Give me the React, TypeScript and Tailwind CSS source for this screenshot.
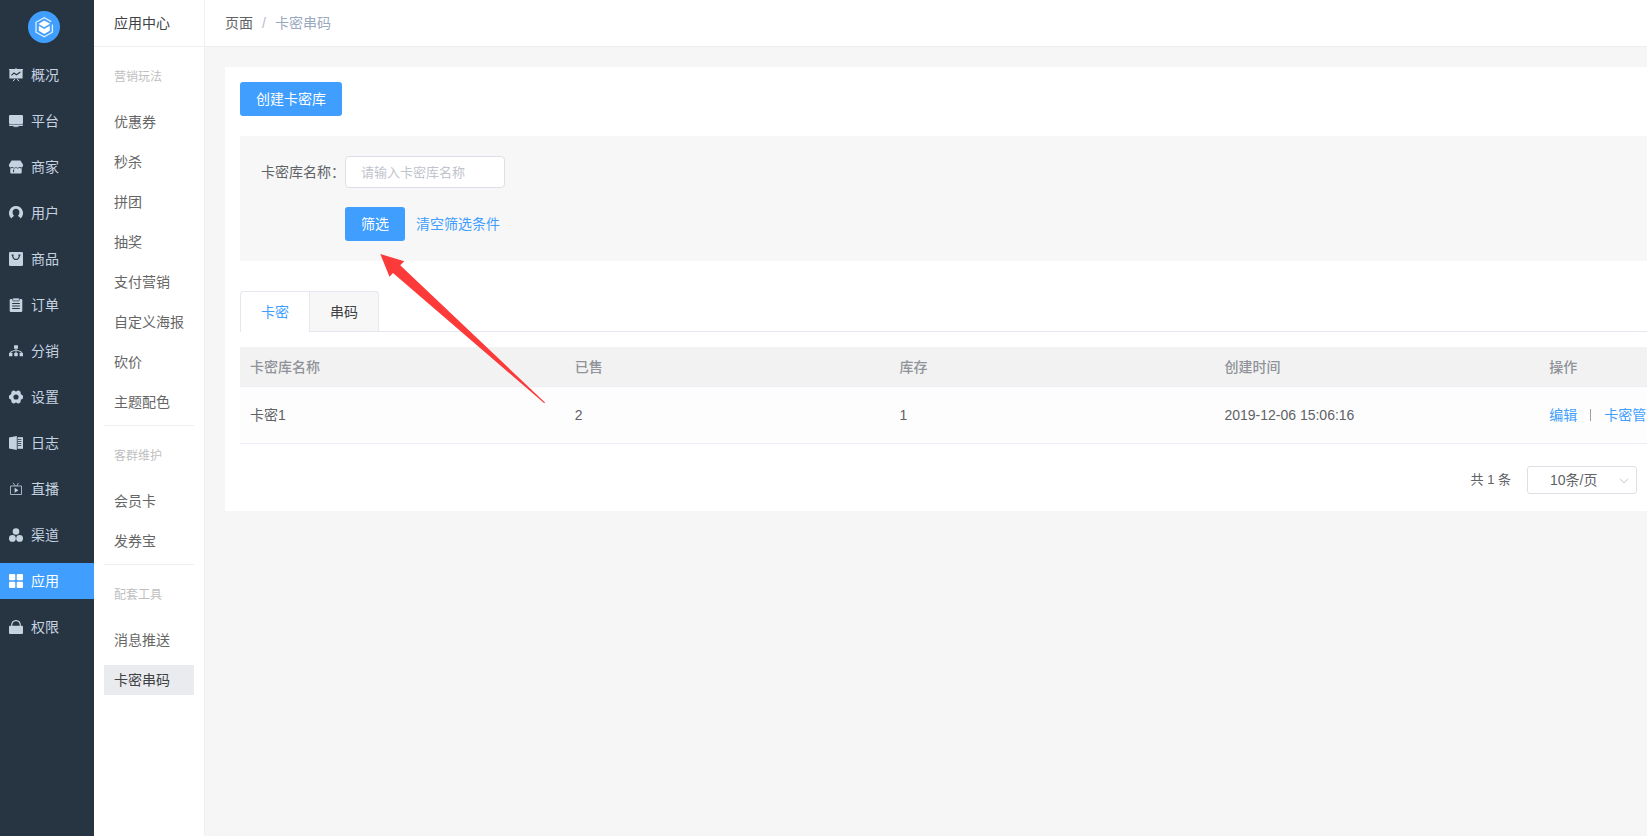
import React from "react";

type IconProps = { children: React.ReactNode };

const Icon = ({ children }: IconProps) => (
  <svg viewBox="0 0 14 14" className="size-3.5 shrink-0" fill="currentColor" aria-hidden="true">
    {children}
  </svg>
);

const cut = "#273543";

const mainNav: { label: string; icon: React.ReactNode }[] = [
  {
    label: "概况",
    icon: (
      <>
        <path d="M0 1h6.300V.2h1.400V1H14v1h-.4v8.400H.4V2H0z" />
        <path d="M2.400 7.400 5 5l2.400 1.800L11.400 4" stroke={cut} strokeWidth="1.100" fill="none" />
        <path d="M5.800 11 4 13.200M8.200 11l1.800 2.200" stroke="currentColor" strokeWidth="1" fill="none" />
      </>
    ),
  },
  {
    label: "平台",
    icon: (
      <>
        <rect x="0" y="1" width="14" height="9" rx="1" />
        <path d="M0 10.600h14v.5a.9.9 0 0 1-.9.9H.9a.9.9 0 0 1-.9-.9z" />
        <rect x="4.500" y="12.200" width="5" height="0.900" />
      </>
    ),
  },
  {
    label: "商家",
    icon: (
      <>
        <path d="M2.600.4h8.800L14 4.600v1.200a1.800 1.800 0 0 1-3.200 1 2.400 2.400 0 0 1-3.800.2 2.400 2.400 0 0 1-3.800-.2A1.800 1.800 0 0 1 0 5.800V4.600z" />
        <path d="M1.300 8.300q1.300.2 2.200-.6 1.700 1.300 3.500.1 1.800 1.200 3.500-.1.900.8 2.200.6v4.300a1 1 0 0 1-1 1H2.300a1 1 0 0 1-1-1z" />
        <path d="M4.600 9.600v2.600" stroke={cut} strokeWidth="1" />
      </>
    ),
  },
  {
    label: "用户",
    icon: (
      <>
        <path d="M7 0a7 7 0 0 0-4.300 12.500c.3-1.300 1-2 2.500-2.600C4.100 9 3.600 7.600 3.600 6.200 3.600 4 5 2.700 7 2.700s3.400 1.300 3.400 3.500c0 1.400-.5 2.800-1.600 3.700 1.500.6 2.200 1.300 2.500 2.600A7 7 0 0 0 7 0z" />
        <ellipse cx="7" cy="6.300" rx="2.200" ry="2.700" fill={cut} />
      </>
    ),
  },
  {
    label: "商品",
    icon: (
      <>
        <rect width="14" height="14" rx="1.200" />
        <path d="M3.600 3.200c.2 2.900 1.500 4.200 3.400 4.200s3.200-1.300 3.400-4.200M2.600 3.100h2M9.400 3.100h2" stroke={cut} strokeWidth="1.200" fill="none" />
      </>
    ),
  },
  {
    label: "订单",
    icon: (
      <>
        <rect x="0.700" y="1" width="12.600" height="13" rx="1.200" />
        <rect x="3.700" y="0" width="6.600" height="2.900" rx="0.600" stroke={cut} strokeWidth="0.700" />
        <path d="M3.200 5.500h7.600M3.200 8h7.600M3.200 10.500h7.600" stroke={cut} strokeWidth="1" />
      </>
    ),
  },
  {
    label: "分销",
    icon: (
      <>
        <rect x="5" y="1.200" width="4" height="3.600" rx="0.500" />
        <rect x="0" y="8.800" width="3.400" height="3.400" rx="0.500" />
        <rect x="5.300" y="8.800" width="3.400" height="3.400" rx="0.500" />
        <rect x="10.600" y="8.800" width="3.400" height="3.400" rx="0.500" />
        <path d="M7 4.500v4.500M1.700 9V7.800L7 6l5.300 1.800V9" stroke="currentColor" strokeWidth="0.900" fill="none" />
      </>
    ),
  },
  {
    label: "设置",
    icon: (
      <path
        fillRule="evenodd"
        d="M4.200.6q.8-.4 1.400.2Q7 2 8.400.8q.6-.6 1.400-.2l1.400.8q.6.500.4 1.300-.2 1.800 1.500 2.300.9.300.9 1.100v1.800q0 .8-.9 1.100-1.700.5-1.500 2.300.2.800-.4 1.300l-1.400.8q-.8.400-1.400-.2-1.400-1.200-2.800 0-.6.600-1.400.2l-1.400-.8q-.6-.5-.4-1.300.2-1.800-1.500-2.300Q0 8.700 0 7.900V6.100Q0 5.300.9 5q1.700-.5 1.500-2.300-.2-.8.400-1.300zM7 4.400a2.600 2.600 0 1 0 0 5.200 2.600 2.600 0 0 0 0-5.200z"
      />
    ),
  },
  {
    label: "日志",
    icon: (
      <>
        <path d="M0 1.600 7.800 0v14L0 12.400z" />
        <path d="M8.600 1.200H14v11.600H8.600z" />
        <path d="M8.600 3.500h3.800M8.600 5.500h3.800M8.600 7.500h3.800M8.600 9.500h3.800" stroke={cut} strokeWidth="0.800" />
      </>
    ),
  },
  {
    label: "直播",
    icon: (
      <>
        <path d="M1.500 4h11v8.500h-11zM4 .8 6.300 4M9.500.8 7.700 4" stroke="currentColor" strokeWidth="0.800" fill="none" />
        <path d="M5.600 5.700v5L9.400 8.200z" />
      </>
    ),
  },
  {
    label: "渠道",
    icon: (
      <>
        <circle cx="7" cy="3.500" r="3.300" />
        <circle cx="3.400" cy="10.400" r="3.400" />
        <circle cx="10.600" cy="10.400" r="3.400" />
      </>
    ),
  },
  {
    label: "应用",
    icon: (
      <>
        <rect x="0" y="0" width="6.300" height="6.300" rx="1" />
        <rect x="7.700" y="0" width="6.300" height="6.300" rx="1" />
        <rect x="0" y="7.700" width="6.300" height="6.300" rx="1" />
        <rect x="7.700" y="7.700" width="6.300" height="6.300" rx="1" />
      </>
    ),
  },
  {
    label: "权限",
    icon: (
      <>
        <rect x="0" y="5.800" width="14" height="8.200" rx="1" />
        <path d="M2.600 6.200C2.600 2.600 4.500.7 7 .7s4.400 1.900 4.400 5.500" stroke="currentColor" strokeWidth="1.200" fill="none" />
      </>
    ),
  },
];

const groups = [
  {
    title: "营销玩法",
    items: ["优惠券", "秒杀", "拼团", "抽奖", "支付营销", "自定义海报", "砍价", "主题配色"],
  },
  { title: "客群维护", items: ["会员卡", "发券宝"] },
  { title: "配套工具", items: ["消息推送", "卡密串码"] },
];

const Logo = () => (
  <svg viewBox="0 0 32 32" className="size-8" aria-hidden="true">
    <circle cx="16" cy="16" r="16" fill="#409eff" />
    <path
      d="M24.400 13.500v7.700L16.200 25.700 8 21.200V11.300L16.200 6.700l7 3.900"
      fill="none"
      stroke="#e3f1ff"
      strokeWidth="1.300"
    />
    <path d="M16.200 9.600 22.200 12.700 16.200 16.200 10.500 12.900z" fill="#fff" />
    <path d="M10.800 14.800 16.200 18l5.600-3.200v4.900L16.200 23l-5.400-3.300z" fill="#fff" />
  </svg>
);

function MainNav() {
  return (
    <nav className="flex w-[94px] shrink-0 flex-col bg-[#273543] pt-[11px]">
      <a href="#home" aria-label="首页" className="mb-3.5 ml-7 size-8">
        <Logo />
      </a>
      <ul className="flex flex-col gap-2.5">
        {mainNav.map(({ label, icon }) => (
          <li key={label}>
            <a
              href={"#" + label}
              className={
                label === "应用"
                  ? "flex h-9 items-center gap-2 bg-[#409eff] pl-[9px] text-white"
                  : "flex h-9 items-center gap-2 pl-[9px] text-[#c5d2e0]"
              }
            >
              <Icon>{icon}</Icon>
              {label}
            </a>
          </li>
        ))}
      </ul>
    </nav>
  );
}

function SubNav() {
  return (
    <aside className="w-[111px] shrink-0 border-r border-[#f0f0f0] bg-white">
      <h1 className="flex h-[47px] items-center border-b border-[#eeeeee] pl-5 text-[#404144]">应用中心</h1>
      {groups.map(({ title, items }, g) => (
        <section
          key={title}
          className={g === 0 ? "mx-2.5 pt-3" : "mx-2.5 mt-2 border-t border-[#eeeeee] pt-3"}
        >
          <h2 className="mb-3 flex h-9 items-center pl-2.5 text-xs text-[#bfbfbf]">{title}</h2>
          <ul className="flex flex-col gap-2.5">
            {items.map((item) => (
              <li key={item}>
                <a
                  href={"#" + item}
                  className={
                    item === "卡密串码"
                      ? "flex h-[30px] items-center bg-[#eaebef] pl-2.5 whitespace-nowrap text-[#404144]"
                      : "flex h-[30px] items-center pl-2.5 whitespace-nowrap text-[#666666]"
                  }
                >
                  {item}
                </a>
              </li>
            ))}
          </ul>
        </section>
      ))}
    </aside>
  );
}

function Filter() {
  return (
    <form className="mt-5 flex flex-col gap-[19px] bg-[#f7f7f7] px-[21px] py-5" onSubmit={(e) => e.preventDefault()}>
      <div className="flex items-center">
        <label htmlFor="name" className="w-[84px] whitespace-nowrap text-[#606266]">
          卡密库名称：
        </label>
        <input
          id="name"
          type="text"
          placeholder="请输入卡密库名称"
          className="h-8 w-40 rounded border border-[#dcdfe6] bg-white px-[15px] text-[13px] text-[#606266] placeholder:text-[#c0c4cc]"
        />
      </div>
      <div className="flex items-center gap-[11px] pl-[84px]">
        <button type="submit" className="h-[34px] w-[60px] rounded-[3px] bg-[#409eff] text-white">
          筛选
        </button>
        <button type="reset" className="text-[#409eff]">
          清空筛选条件
        </button>
      </div>
    </form>
  );
}

function CardTable() {
  return (
    <table className="mt-[15px] w-full table-fixed border-separate border-spacing-0 text-left">
      <thead className="bg-[#f2f2f2] text-[#909399]">
        <tr>
          {["卡密库名称", "已售", "库存", "创建时间", "操作"].map((h) => (
            <th key={h} scope="col" className="h-10 w-1/5 border-b border-[#ebeef5] px-2.5 py-0 font-medium">
              {h}
            </th>
          ))}
        </tr>
      </thead>
      <tbody className="bg-[#fdfdfd] text-[#606266]">
        <tr>
          {["卡密1", "2", "1", "2019-12-06 15:06:16"].map((value, i) => (
            <td key={i} className="h-[57px] border-b border-[#ebeef5] px-2.5 py-0">
              {value}
            </td>
          ))}
          <td className="h-[57px] border-b border-[#ebeef5] px-2.5 py-0">
            <div className="flex items-center whitespace-nowrap text-[#409eff]">
              <a href="#edit">编辑</a>
              <span className="mx-[13px] h-3 w-px bg-[#a0a0a0]" />
              <a href="#manage">卡密管理</a>
            </div>
          </td>
        </tr>
      </tbody>
    </table>
  );
}

function Pager() {
  return (
    <div className="mt-[22px] flex items-center justify-end gap-4 pr-[227px] text-[#606266]">
      <span className="text-[13px]">共 1 条</span>
      <div className="relative flex">
        <select
          aria-label="每页条数"
          className="h-7 w-[110px] appearance-none rounded-[3px] border border-[#dcdfe6] bg-white pl-[22px] text-sm"
        >
          <option>10条/页</option>
          <option>20条/页</option>
        </select>
        <svg
          viewBox="0 0 10 6"
          className="pointer-events-none absolute top-3 right-2 h-1.5 w-2.5"
          fill="none"
          stroke="#c0c4cc"
          aria-hidden="true"
        >
          <path d="M1 .8 5 4.800 9 .8" />
        </svg>
      </div>
    </div>
  );
}

export default function App() {
  return (
    <div className="flex min-h-screen overflow-hidden bg-[#f6f6f6] font-['Liberation_Sans','Noto_Sans_CJK_SC',sans-serif] text-sm">
      <MainNav />
      <SubNav />
      <div className="min-w-0 flex-1 overflow-hidden">
        <header className="flex h-[47px] items-center border-b border-[#eeeeee] bg-white pl-5 text-[#606266]">
          <a href="#page">页面</a>
          <span className="mx-[9px] text-[#b4bccc]">/</span>
          <span className="text-[#99a9bf]">卡密串码</span>
        </header>
        <main className="relative mt-5 ml-5 w-[calc(100%+212px)] bg-white px-[15px] pt-[15px] pb-[17px]">
          <button type="button" className="block h-[34px] w-[102px] rounded-[3px] bg-[#409eff] text-white">
            创建卡密库
          </button>
          <Filter />
          <div role="tablist" className="mt-[30px] flex h-[41px] border-b border-[#e4e7ed]">
            <button
              type="button"
              role="tab"
              aria-selected="true"
              className="-mb-px w-[69px] rounded-tl border-t border-l border-[#e4e7ed] bg-white text-[#409eff]"
            >
              卡密
            </button>
            <button
              type="button"
              role="tab"
              aria-selected="false"
              className="w-[70px] rounded-tr border-t border-r border-l border-[#e4e7ed] bg-[#f7f7f7] text-[#404144]"
            >
              串码
            </button>
          </div>
          <CardTable />
          <Pager />
          <svg
            viewBox="0 0 165 150"
            className="pointer-events-none absolute top-[187px] left-[155px] h-[150px] w-[165px]"
            fill="#fc3a3a"
            aria-hidden="true"
          >
            <path d="M.3 0 24.300 7.300 20.200 11.200 165 148.500 164.300 149.300 13 19 9.500 22.800z" />
          </svg>
        </main>
      </div>
    </div>
  );
}
